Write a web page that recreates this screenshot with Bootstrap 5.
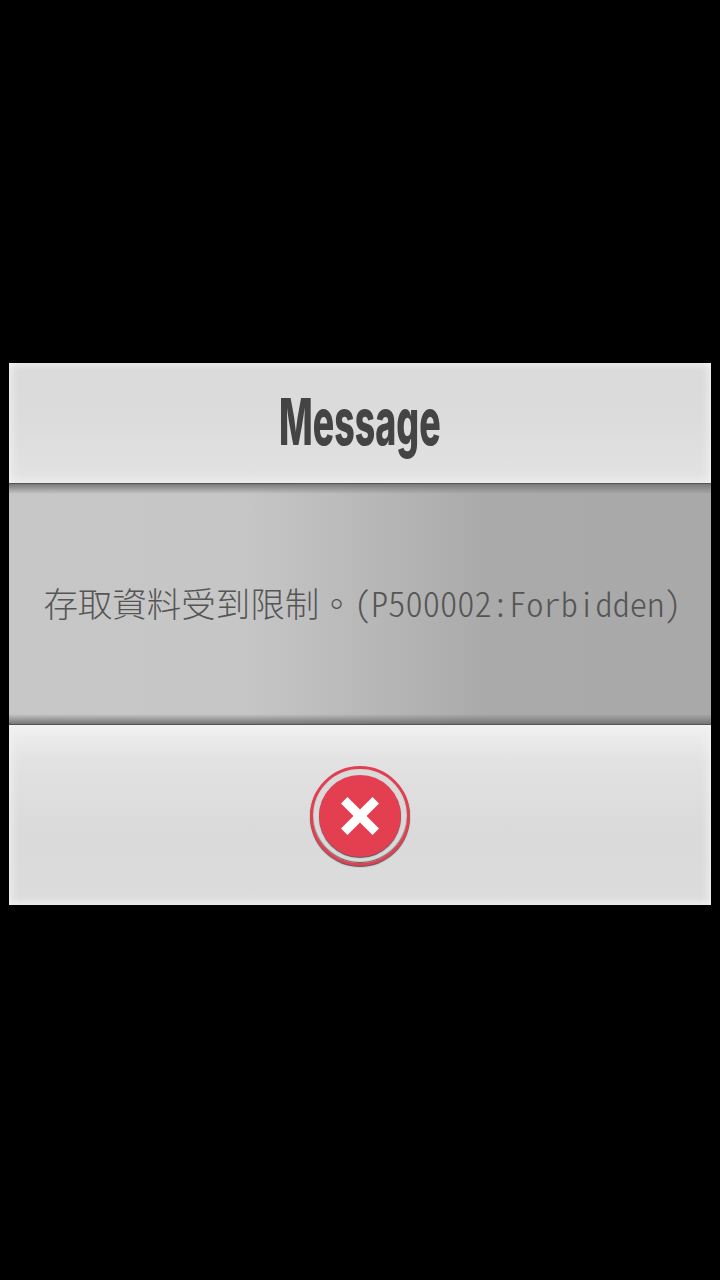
<!DOCTYPE html>
<html lang="zh-Hant">
<head>
<meta charset="utf-8">
<title>Message</title>
<link href="https://cdn.jsdelivr.net/npm/bootstrap@5.3.0/dist/css/bootstrap.min.css" rel="stylesheet">
<style>
html,body{height:100%;background:#000}
.stage{height:1280px;padding:363px 9px 375px}
.dlg{width:702px;height:542px}
.dlg-head{height:121px;background:linear-gradient(180deg,#dadada 0%,#dcdcdc 50%,#e3e3e3 100%);box-shadow:inset 0 0 8px 2px #f2f2f2;border-bottom:1px solid #555}
.dlg-title{font-family:Inter,"Liberation Sans",sans-serif;font-weight:800;font-size:65px;line-height:1;color:#444;transform:scaleX(.55);margin-top:-3px}
.dlg-body{height:240px;background:linear-gradient(90deg,#c7c7c7 0%,#c6c6c6 34%,#aaa 68%,#a9a9a9 100%);position:relative;padding:0 0 4px 5px}
.dlg-body::before,.dlg-body::after{content:"";position:absolute;left:0;right:0;height:10px}
.dlg-body::before{top:0;background:linear-gradient(180deg,#7a7a7a,rgba(122,122,122,0))}
.dlg-body::after{bottom:0;background:linear-gradient(0deg,#757575,rgba(122,122,122,0))}
.dlg-msg{font-family:"Noto Sans CJK TC","Noto Sans CJK SC",sans-serif;font-weight:300;font-size:34.5px;line-height:1;color:#555;font-feature-settings:"hwid";white-space:nowrap}
.dlg-foot{height:181px;border-top:1px solid #555;background:linear-gradient(180deg,#f0f0f0 0%,#e2e2e2 20%,#dadada 60%,#dcdcdc 100%);box-shadow:inset 0 0 8px 2px #f2f2f2;padding-top:1px}
.dlg-close{width:100px;height:100px;padding:0;border-radius:50%;border:3px solid #e23f50;background:#dadada;box-shadow:inset 0 -1px 1px #555,0 1px 1px #555}
.dlg-close-in{width:82px;height:82px;border-radius:50%;background:#e43f51;box-shadow:0 1px 1px #555}
</style>
</head>
<body class="m-0">
<div class="stage">
  <div class="dlg d-flex flex-column">
    <div class="dlg-head d-flex align-items-center justify-content-center flex-shrink-0">
      <div class="dlg-title">Message</div>
    </div>
    <div class="dlg-body d-flex align-items-center justify-content-center flex-shrink-0">
      <div class="dlg-msg">存取資料受到限制。(P500002:Forbidden)</div>
    </div>
    <div class="dlg-foot d-flex align-items-center justify-content-center flex-shrink-0">
      <button type="button" class="dlg-close btn d-flex align-items-center justify-content-center" aria-label="Close">
        <span class="dlg-close-in d-flex align-items-center justify-content-center">
          <svg width="38" height="38" viewBox="0 0 38 38"><path d="M6.500 0 19 12.500 31.500 0 38 6.500 25.500 19 38 31.500 31.500 38 19 25.500 6.500 38 0 31.500 12.500 19 0 6.500Z" fill="#fff"/></svg>
        </span>
      </button>
    </div>
  </div>
</div>
<script src="https://cdn.jsdelivr.net/npm/bootstrap@5.3.0/dist/js/bootstrap.bundle.min.js"></script>
</body>
</html>
